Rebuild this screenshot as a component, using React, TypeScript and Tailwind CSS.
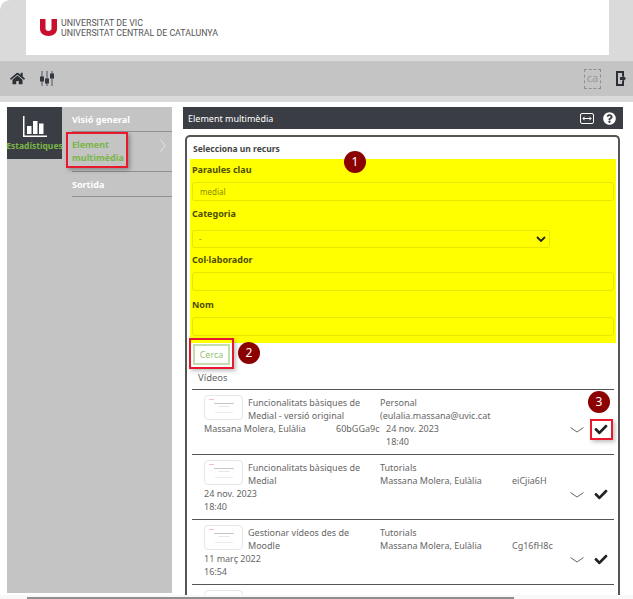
import { FaCheck, FaHome, FaQuestionCircle } from 'react-icons/fa';

const rows = [
  {
    title: ['Funcionalitats bàsiques de', 'Medial - versió original'],
    category: 'Personal',
    person: '(eulalia.massana@uvic.cat',
    name: 'Massana Molera, Eulàlia',
    code: '60bGGa9c',
    date: '24 nov. 2023',
    time: '18:40',
    inline: true,
  },
  {
    title: ['Funcionalitats bàsiques de', 'Medial'],
    category: 'Tutorials',
    person: 'Massana Molera, Eulàlia',
    code: 'eiCjia6H',
    date: '24 nov. 2023',
    time: '18:40',
  },
  {
    title: ['Gestionar vídeos des de', 'Moodle'],
    category: 'Tutorials',
    person: 'Massana Molera, Eulàlia',
    code: 'Cg16fH8c',
    date: '11 març 2022',
    time: '16:54',
  },
];

function Badge({ n, className }: { n: number; className: string }) {
  return (
    <span className={`absolute flex h-[22px] w-[22px] items-center justify-center rounded-full bg-[#8b0000] text-[12px] text-white ${className}`}>
      {n}
    </span>
  );
}

function Thumb() {
  return (
    <div className="h-[25px] w-[39px] shrink-0 rounded-sm border border-[#e6e6e6] bg-white px-[4px] py-[3px]">
      <div className="h-px w-[5px] bg-[#ecc4c4]" />
      <div className="mx-auto mt-[3px] h-px w-[20px] bg-[#c8c8c8]" />
      <div className="mx-auto mt-[2px] h-px w-[12px] bg-[#e6e6e6]" />
      <div className="mx-auto mt-[5px] h-px w-[18px] bg-[#ebebeb]" />
    </div>
  );
}

function Chevron() {
  return (
    <svg width="14" height="6" viewBox="0 0 14 6" fill="none" stroke="#555" strokeWidth="0.9">
      <path d="M0.5 0.5 L7 5 L13.5 0.5" />
    </svg>
  );
}

function Field({ label, value }: { label: string; value?: string }) {
  return (
    <div>
      <div className="h-[22px] text-[9px] leading-[22px] font-bold text-[#4d4d00]">{label}</div>
      <div className="mt-[1px] flex h-[19px] items-center rounded-[3px] border border-[#e6e600] px-[7px] text-[8px] text-[#8a8a00]">
        {value}
      </div>
    </div>
  );
}

export default function App() {
  return (
    <div className="relative h-[599px] w-[633px] overflow-hidden bg-white font-['Noto_Sans',sans-serif]">
      <div className="h-[61px] rounded-tl-[10px] bg-[#dadada] pl-[26px] pr-[24px]">
        <div className="flex h-[55px] items-center bg-white pl-[14px]">
          <svg width="17" height="17" viewBox="0 0 17 17" className="shrink-0">
            <path d="M0 0H5.5V9.5C5.5 11 6.8 12 8.5 12C10.2 12 11.5 11 11.5 9.5V0H17V10C17 14 13.5 17 8.5 17C3.5 17 0 14 0 10Z" fill="#c8102e" />
          </svg>
          <div className="ml-[4px] font-['Roboto',sans-serif] text-[8.8px] leading-[10px] text-[#555]">
            <div>UNIVERSITAT DE VIC</div>
            <div>UNIVERSITAT CENTRAL DE CATALUNYA</div>
          </div>
        </div>
      </div>
      <div className="flex h-[35px] items-center bg-[#c4c4c4] pl-[10px] pr-[6px]">
        <FaHome className="h-[15px] w-[15px] text-[#2c3036]" />
        <svg width="14" height="15" viewBox="0 0 14 15" className="ml-[15px]" stroke="#33383e" fill="#33383e">
          <path d="M2 0V15M7 0V15M12 0V15" strokeWidth="0.8" />
          <rect x="0.5" y="6" width="3" height="4" />
          <rect x="5.5" y="8" width="3" height="4" />
          <rect x="10.5" y="3" width="3" height="4" />
        </svg>
        <div className="ml-auto flex h-[20px] w-[17px] items-center justify-center border border-dashed border-[#8f8f8f] text-[11px] text-[#9a9a9a]">ca</div>
        <svg width="10" height="15" viewBox="0 0 10 15" className="ml-[15px] mr-[1px]" fill="#2c3036">
          <path d="M0 0H8V5H6V2H2V13H6V10H8V15H0Z" />
          <path d="M4 6H6.5V3.8L10 7.5L6.5 11.2V9H4Z" />
        </svg>
      </div>
      <div className="h-[6px] bg-[#dadada]" />

      <div className="flex items-start pl-[7px] pt-[5px]">
        <div className="flex h-[486px] w-[165px] items-start bg-[#c4c4c4]">
          <div className="flex h-[52px] w-[55px] flex-col items-center bg-[#3a3d44] pt-[9px]">
            <svg width="24" height="21" viewBox="0 0 24 21" fill="white">
              <path d="M0 0H1.5V19.5H24V21H0Z" />
              <rect x="4" y="10" width="4.5" height="8" />
              <rect x="10" y="5" width="4.5" height="13" />
              <rect x="16" y="7.5" width="4.5" height="10.5" />
            </svg>
            <div className="mt-[3px] text-[8.5px] font-bold whitespace-nowrap text-[#7ab648]">Estadístiques</div>
          </div>
          <div className="ml-[10px] flex-1 text-[9px] leading-[13px] font-bold text-white">
            <div className="flex h-[25px] items-center border-b border-[#8f8f8f]">Visió general</div>
            <div className="relative h-[40px] border-b border-[#8f8f8f] pt-[6px] text-[#7ab648]">
              Element
              <br />
              multimèdia
              <svg width="6" height="13" viewBox="0 0 6 13" fill="none" stroke="#eeeeee" strokeWidth="0.8" className="absolute top-[7px] right-[6px]">
                <path d="M0.5 0.5L5 6.5L0.5 12.5" />
              </svg>
              <div className="absolute top-0 left-[-6px] h-[36px] w-[62px] border-2 border-[#e8192c] shadow-[2px_2px_4px_rgba(0,0,0,0.3)]" />
            </div>
            <div className="flex h-[25px] items-center border-b border-[#8f8f8f]">Sortida</div>
          </div>
        </div>

        <div className="ml-[11px] w-[440px]">
          <div className="flex h-[22px] items-center bg-[#3a3d44] pl-[5px] pr-[7px] pt-[2px] text-[9px] text-white">
            Element multimèdia
            <svg width="14" height="11" viewBox="0 0 14 11" fill="none" stroke="white" className="ml-auto mb-[2px]">
              <rect x="0.5" y="0.5" width="13" height="10" rx="1.5" />
              <path d="M3 5.5H11M4.5 3.8L3 5.5L4.5 7.2M9.5 3.8L11 5.5L9.5 7.2" />
            </svg>
            <FaQuestionCircle className="ml-[9px] mb-[2px] h-[13px] w-[13px] text-white" />
          </div>

          <div className="relative mt-[6px] ml-[2px] h-[470px] w-[435px] overflow-hidden rounded-t-[5px] border-2 border-b-0 border-[#555] pl-[3px]">
            <div className="h-[22px] pl-[3px] pt-[5px] text-[8.5px] leading-[14px] font-bold text-[#444]">Selecciona un recurs</div>
            <div className="h-[184px] w-[426px] bg-[#ffff00] pl-[2px] pr-[2px]">
              <Field label="Paraules clau" value="medial" />
              <div className="mt-[2px] h-[22px] text-[9px] leading-[22px] font-bold text-[#4d4d00]">Categoria</div>
              <div className="mt-[5px] mb-[2px] flex h-[18px] w-[358px] items-center justify-between rounded-[2px] border border-[#e6e600] pl-[6px] pr-[3px] text-[8px] text-[#8a8a00]">
                -
                <svg width="10" height="7" viewBox="0 0 10 7" fill="none" stroke="#222" strokeWidth="1.8">
                  <path d="M1 1L5 5L9 1" />
                </svg>
              </div>
              <div className="mt-[-1px]">
                <Field label="Col·laborador" />
              </div>
              <div className="mt-[3px]">
                <Field label="Nom" />
              </div>
            </div>

            <div className="relative ml-[2px] mt-[1px] h-[24px]">
              <div className="absolute top-0 left-[1px] flex h-[21px] w-[37px] items-center justify-center border-2 border-[#c5dcae] text-[9px] text-[#93c26f]">Cerca</div>
              <div className="absolute top-[-6px] left-[-3px] h-[31px] w-[45px] border-2 border-[#e8192c] shadow-[2px_2px_4px_rgba(0,0,0,0.25)]" />
            </div>
            <div className="h-[21px] pl-[8px] pt-[3px] text-[9.5px] leading-[13px] text-[#666]">Vídeos</div>

            {rows.map((r, i) => (
              <div key={i} className="relative ml-[2px] h-[65px] w-[422px] border-t border-[#555] pl-[12px] pt-[5px] text-[9px] leading-[13px] text-[#666]">
                <div className="flex">
                  <Thumb />
                  <div className="ml-[5px] w-[132px] shrink-0 pt-px">
                    <div>{r.title[0]}</div>
                    <div>{r.title[1]}</div>
                  </div>
                  <div className="pt-px whitespace-nowrap">
                    <div>{r.category}</div>
                    <div className="flex">
                      <span className="w-[132px]">{r.person}</span>
                      {!r.inline && <span>{r.code}</span>}
                    </div>
                  </div>
                </div>
                {r.inline ? (
                  <div className="flex">
                    <span className="w-[132px]">{r.name}</span>
                    <span className="w-[50px]">{r.code}</span>
                    <div>
                      <div>{r.date}</div>
                      <div>{r.time}</div>
                    </div>
                  </div>
                ) : (
                  <div>
                    <div>{r.date}</div>
                    <div>{r.time}</div>
                  </div>
                )}
                <div className="absolute top-[37px] right-[30px]">
                  <Chevron />
                </div>
                <FaCheck className="absolute top-[33px] right-[6px] h-[13px] w-[14px] text-[#222]" />
              </div>
            ))}
            {/* next row is only just visible above the page scrollbar */}
            <div className="ml-[2px] w-[422px] border-t border-[#555] pl-[12px] pt-[5px]">
              <div className="h-[25px] w-[39px] rounded-sm border border-[#e6e6e6]" />
            </div>

            <Badge n={1} className="top-[14px] left-[157px]" />
            <Badge n={2} className="top-[205px] left-[51px]" />
            <Badge n={3} className="top-[254px] left-[401px]" />
            <div className="absolute top-[282px] left-[403px] h-[21px] w-[23px] border-2 border-[#e8192c] shadow-[2px_2px_4px_rgba(0,0,0,0.25)]" />
          </div>
        </div>
      </div>

      <div className="absolute right-0 bottom-0 left-0 h-[4px] bg-[#f8f8f8]">
        <div className="absolute right-[119px] bottom-0 left-[27px] h-[2px] bg-[#8f8f8f]" />
      </div>
    </div>
  );
}
